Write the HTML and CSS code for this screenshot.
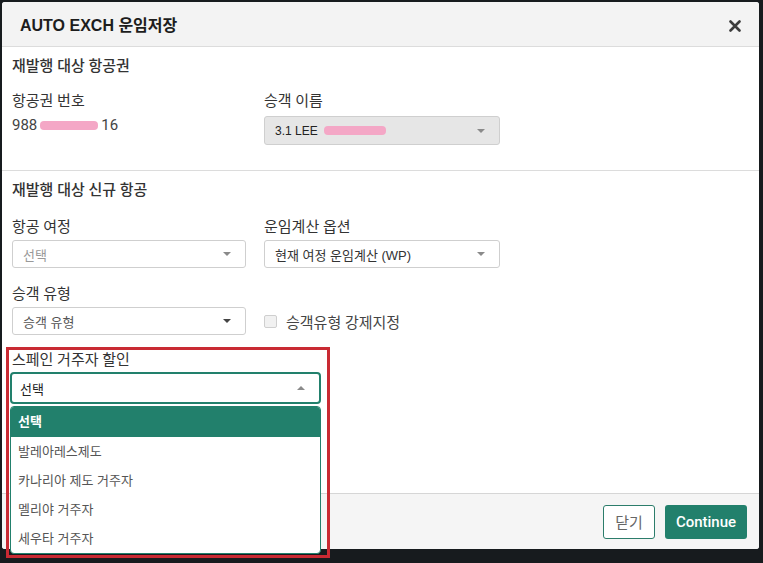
FILE: index.html
```html
<!DOCTYPE html>
<html lang="ko">
<head>
    <meta charset="UTF-8">
    <meta name="viewport" content="width=device-width, initial-scale=1.0">
    <title>AUTO EXCH 운임저장</title>
    <link rel="stylesheet" href="styles.css">
</head>
<body>
    <div class="modal">
        <div class="modal-header">
            <h1 class="modal-title">AUTO EXCH 운임저장</h1>
            <button class="btn-close" type="button" aria-label="close">
                <svg width="12" height="12" viewBox="0 0 12 12">
                    <path d="M1.5 1.5 L10.5 10.5 M10.5 1.5 L1.5 10.5" stroke="#3d3d3d" stroke-width="2.6" stroke-linecap="round"/>
                </svg>
            </button>
        </div>

        <div class="modal-body">
            <section class="block block-ticket">
                <h2 class="block-title">재발행 대상 항공권</h2>
                <div class="form-grid">
                    <div class="field">
                        <label class="field-label">항공권 번호</label>
                        <div class="field-value">988<span class="redact redact-ticket"></span>16</div>
                    </div>
                    <div class="field">
                        <label class="field-label">승객 이름</label>
                        <div class="select select-disabled">3.1 LEE<span class="redact redact-name"></span><i class="caret"></i></div>
                    </div>
                </div>
            </section>

            <section class="block block-new">
                <h2 class="block-title">재발행 대상 신규 항공</h2>
                <div class="form-grid">
                    <div class="field">
                        <label class="field-label">항공 여정</label>
                        <div class="select select-placeholder">선택<i class="caret"></i></div>
                    </div>
                    <div class="field">
                        <label class="field-label">운임계산 옵션</label>
                        <div class="select">현재 여정 운임계산 (WP)<i class="caret"></i></div>
                    </div>
                    <div class="field">
                        <label class="field-label">승객 유형</label>
                        <div class="select select-dark">승객 유형<i class="caret"></i></div>
                    </div>
                    <div class="field field-check">
                        <label class="check">
                            <span class="check-box"></span>
                            승객유형 강제지정
                        </label>
                    </div>
                    <div class="field field-spain">
                        <div class="highlight"></div>
                        <label class="field-label">스페인 거주자 할인</label>
                        <div class="select select-open">선택<i class="caret caret-up"></i></div>
                        <ul class="dropdown">
                            <li class="dropdown-item active">선택</li>
                            <li class="dropdown-item">발레아레스제도</li>
                            <li class="dropdown-item">카나리아 제도 거주자</li>
                            <li class="dropdown-item">멜리야 거주자</li>
                            <li class="dropdown-item">세우타 거주자</li>
                        </ul>
                    </div>
                </div>
            </section>
        </div>

        <div class="modal-footer">
            <button class="btn btn-outline" type="button">닫기</button>
            <button class="btn btn-primary" type="button">Continue</button>
        </div>
    </div>
</body>
</html>
```

FILE: styles.css
```css
body {
    margin: 0;
    height: 563px;
    background: #171b1e;
    font-family: Roboto, "Noto Sans CJK KR", sans-serif;
    color: #333;
    overflow: hidden;
}
.modal {
    margin: 2px 0 0 2px;
    width: 757px;
    height: 547px;
    background: #fff;
    border-radius: 3px;
    display: flex;
    flex-direction: column;
}
.modal-header {
    height: 44px;
    background: #f3f3f3;
    border-bottom: 1px solid #dcdcdc;
    border-radius: 3px 3px 0 0;
    display: flex;
    align-items: center;
    justify-content: space-between;
    padding: 0 18px 0 18px;
}
.modal-title {
    margin: 0;
    font-family: "Liberation Sans", "Noto Sans CJK KR", sans-serif;
    font-size: 16px;
    font-weight: bold;
    color: #1d1d1d;
}
.btn-close {
    border: 0;
    background: none;
    padding: 0;
    width: 12px;
    height: 12px;
    margin-top: 3px;
    display: flex;
}
.modal-body {
    flex: 1;
}
.block {
    padding: 9px 10px 0 10px;
}
.block-ticket {
    padding-bottom: 25px;
}
.block-new {
    border-top: 1px solid #dcdcdc;
}
.block-title {
    margin: 0 0 15px 0;
    font-size: 15px;
    line-height: 20px;
    font-weight: 500;
    color: #333;
}
.block-new .block-title {
    margin-bottom: 17px;
}
.form-grid {
    display: grid;
    grid-template-columns: 234px 236px;
    column-gap: 18px;
    row-gap: 16px;
}
.field {
    position: relative;
    display: flex;
    flex-direction: column;
}
.field-label {
    font-size: 15px;
    line-height: 20px;
    color: #333;
    margin-bottom: 3px;
}
.block-ticket .field-label {
    margin-bottom: 5px;
}
.field-value {
    font-size: 15px;
    line-height: 18px;
    color: #444;
    display: flex;
    align-items: center;
}
.redact {
    display: inline-block;
    height: 9px;
    background: #f4a7c6;
    border-radius: 4px;
}
.redact-ticket {
    width: 58px;
    margin: 0 3px 0 3px;
}
.redact-name {
    width: 62px;
    margin-left: 6px;
}
.select {
    position: relative;
    height: 28px;
    box-sizing: border-box;
    border: 1px solid #cfcfcf;
    border-radius: 3px;
    padding: 0 10px;
    font-family: "Liberation Sans", "Noto Sans CJK KR", sans-serif;
    font-size: 13px;
    color: #333;
    display: flex;
    align-items: center;
}
.select-disabled {
    height: 29px;
    background: #e6e6e6;
    color: #222;
    font-size: 12px;
}
.select-placeholder {
    color: #999;
}
.select-dark {
    color: #555;
}
.select-dark .caret {
    border-top-color: #444;
}
.caret {
    position: absolute;
    right: 14px;
    top: 50%;
    margin-top: -2px;
    width: 0;
    height: 0;
    border-left: 4px solid transparent;
    border-right: 4px solid transparent;
    border-top: 4px solid #8a8a8a;
}
.caret-up {
    border-top: 0;
    border-bottom: 4px solid #8a8a8a;
}
.field-check {
    justify-content: flex-end;
}
.check {
    height: 28px;
    display: flex;
    align-items: center;
    font-size: 15px;
    color: #444;
}
.check-box {
    width: 11px;
    height: 11px;
    border: 1px solid #cfcfcf;
    border-radius: 2px;
    background: #f1f1f1;
    margin-right: 9px;
}
.field-spain {
    grid-column: 1;
    margin-top: -1px;
}
.field-spain .field-label {
    margin-bottom: 2px;
}
.select-open {
    margin-left: -2px;
    width: 311px;
    height: 32px;
    border: 2px solid #22806c;
    border-radius: 4px;
    padding: 0 8px;
    color: #222;
}
.highlight {
    position: absolute;
    left: -6px;
    top: -3px;
    width: 318px;
    height: 205px;
    border: 3px solid #c92a33;
    pointer-events: none;
    z-index: 2;
}
.dropdown {
    position: absolute;
    left: -2px;
    top: 56px;
    width: 311px;
    margin: 0;
    padding: 0;
    list-style: none;
    box-sizing: border-box;
    border: 1px solid #22806c;
    border-radius: 4px;
    background: #fff;
    overflow: hidden;
    z-index: 1;
}
.dropdown-item {
    height: 29px;
    line-height: 29px;
    padding: 0 7px;
    font-family: "Liberation Sans", "Noto Sans CJK KR", sans-serif;
    font-size: 13px;
    color: #555;
}
.dropdown-item.active {
    height: 30px;
    line-height: 30px;
    background: #22806c;
    color: #fff;
    font-weight: bold;
}
.modal-footer {
    height: 55px;
    background: #f5f5f5;
    border-top: 1px solid #d6d6d6;
    border-radius: 0 0 3px 3px;
    display: flex;
    align-items: center;
    justify-content: flex-end;
    gap: 10px;
    padding-right: 12px;
}
.btn {
    height: 34px;
    box-sizing: border-box;
    border-radius: 3px;
    font-family: Roboto, "Noto Sans CJK KR", sans-serif;
    font-size: 15px;
    padding: 0;
}
.btn-outline {
    width: 52px;
    border: 1px solid #2c7d6b;
    background: #fff;
    color: #666;
}
.btn-primary {
    width: 82px;
    border: 0;
    background: #22806c;
    color: #fff;
    font-weight: 500;
}
```
